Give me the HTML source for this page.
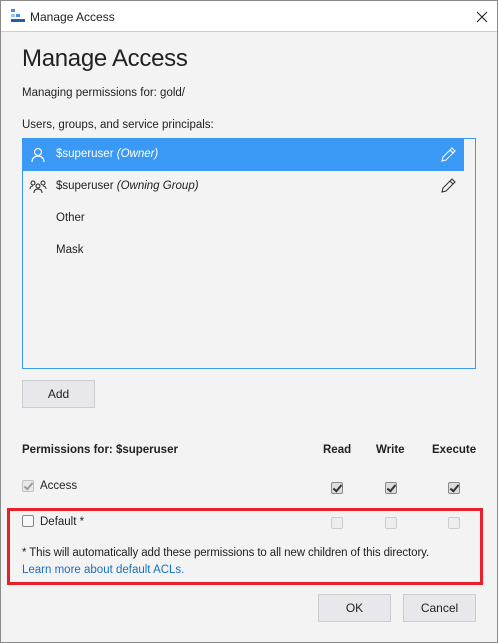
<!DOCTYPE html>
<html><head><style>
*{margin:0;padding:0;box-sizing:border-box}
body{width:498px;height:643px;background:#f3f3f3;font-family:"Segoe UI","Liberation Sans",sans-serif;font-size:12px;color:#222;position:relative;overflow:hidden;border:1px solid #8a8a8a}
.a{position:absolute;white-space:nowrap}
.title{left:0;top:0;width:496px;height:31px;background:#fff;border-bottom:1px solid #ccc}
.cb{position:absolute;width:12px;height:12px;border:1px solid #aaa;border-radius:2px;background:#eee}
.ck{background:#ddd;border-color:#888}
.ck::after{content:"";position:absolute;left:3px;top:0px;width:3px;height:7px;border:solid #333;border-width:0 2px 2px 0;transform:rotate(40deg)}
.btn{position:absolute;background:#e8e8ec;border:1px solid #ccc;text-align:center;line-height:26px;font-size:12px}
</style></head><body>
<div class="a title"></div>
<svg class="a" style="left:9px;top:8px" width="16" height="14"><rect x="1" y="0" width="4" height="3" fill="#4a8fd8"/><rect x="1" y="5" width="4" height="3" fill="#9cc4ee"/><rect x="6" y="5" width="4" height="3" fill="#4a8fd8"/><rect x="1" y="10" width="14" height="3" fill="#1f5fb0"/></svg>
<div class="a" style="left:29px;top:9px;font-size:12px">Manage Access</div>
<svg class="a" style="left:475px;top:10px" width="12" height="12" stroke="#222" stroke-width="1.1"><path d="M1 1l10 10M11 1L1 11"/></svg>
<div class="a" style="left:21px;top:44px;font-size:24px;color:#222;letter-spacing:-0.3px">Manage Access</div>
<div class="a" style="left:21px;top:86px;font-size:11.5px">Managing permissions for: gold/</div>
<div class="a" style="left:21px;top:118px;font-size:11.5px">Users, groups, and service principals:</div>
<div class="a" style="left:21px;top:137px;width:454px;height:231px;border:1px solid #3a9af2;background:#f3f3f3"></div>
<div class="a" style="left:22px;top:138px;width:441px;height:32px;background:#3999f5"></div>
<svg class="a" style="left:29px;top:146px" width="16" height="16" fill="none" stroke="#fff" stroke-width="1.2"><circle cx="8" cy="5" r="3.5"/><path d="M2 15c0-4 3-6 6-6s6 2 6 6"/></svg>
<div class="a" style="left:55px;top:147px;color:#fff;font-size:11.5px">$superuser <i>(Owner)</i></div>
<svg class="a" style="left:439px;top:146px" width="16" height="16" fill="none" stroke="#fff" stroke-width="1.1"><path d="M2 14l1-4 9-9 3 3-9 9z M10 3l3 3"/></svg>
<svg class="a" style="left:28px;top:179px" width="18" height="14" fill="none" stroke="#222" stroke-width="1"><circle cx="4" cy="3" r="2"/><circle cx="14" cy="3" r="2"/><circle cx="9" cy="6" r="2"/><path d="M1 9c0-2 1.5-3 3-3M17 9c0-2-1.5-3-3-3M5 13c0-3 2-4 4-4s4 1 4 4"/></svg>
<div class="a" style="left:55px;top:179px;font-size:11.5px">$superuser <i>(Owning Group)</i></div>
<svg class="a" style="left:439px;top:177px" width="16" height="16" fill="none" stroke="#333" stroke-width="1.1"><path d="M2 14l1-4 9-9 3 3-9 9z M10 3l3 3"/></svg>
<div class="a" style="left:55px;top:211px;font-size:11.5px">Other</div>
<div class="a" style="left:55px;top:243px;font-size:11.5px">Mask</div>
<div class="btn" style="left:21px;top:379px;width:73px;height:28px">Add</div>
<div class="a" style="left:21px;top:443px;font-weight:bold;font-size:11.5px">Permissions for: $superuser</div>
<div class="a" style="left:322px;top:443px;font-weight:bold;font-size:11.5px">Read</div>
<div class="a" style="left:375px;top:443px;font-weight:bold;font-size:11.5px">Write</div>
<div class="a" style="left:431px;top:443px;font-weight:bold;font-size:11.5px">Execute</div>
<div class="cb ck" style="left:21px;top:479px;opacity:.45"></div>
<div class="a" style="left:39px;top:479px;font-size:11.5px">Access</div>
<div class="cb ck" style="left:330px;top:481px"></div>
<div class="cb ck" style="left:384px;top:481px"></div>
<div class="cb ck" style="left:447px;top:481px"></div>
<div class="a" style="left:6px;top:507px;width:476px;height:77px;border:3px solid #e8202a"></div>
<div class="cb" style="left:21px;top:514px;background:#f7f7f7;border-color:#888"></div>
<div class="a" style="left:39px;top:515px;font-size:11.5px">Default *</div>
<div class="cb" style="left:330px;top:516px;border-color:#ccc"></div>
<div class="cb" style="left:384px;top:516px;border-color:#ccc"></div>
<div class="cb" style="left:447px;top:516px;border-color:#ccc"></div>
<div class="a" style="left:21px;top:546px;font-size:11.5px;letter-spacing:-0.1px">* This will automatically add these permissions to all new children of this directory.</div>
<div class="a" style="left:21px;top:563px;color:#1a70c0;font-size:11.5px">Learn more about default ACLs.</div>
<div class="btn" style="left:317px;top:593px;width:73px;height:28px">OK</div>
<div class="btn" style="left:402px;top:593px;width:73px;height:28px">Cancel</div>
</body></html>
